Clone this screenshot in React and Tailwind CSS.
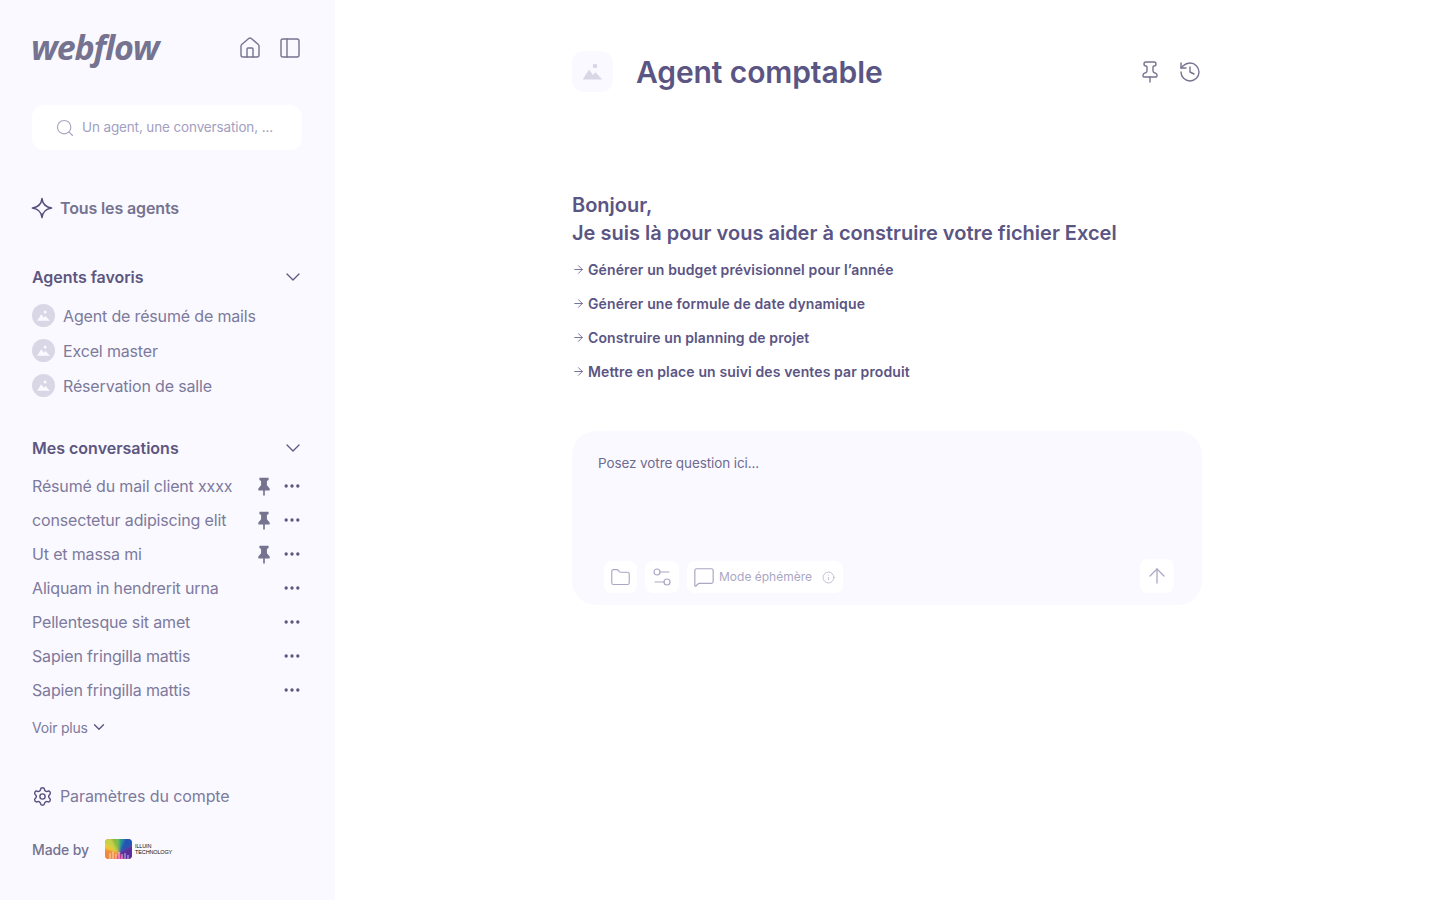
import React from 'react';
import {
  ArrowRight,
  ArrowUp,
  ChevronDown,
  Ellipsis,
  Folder,
  History,
  House,
  Info,
  MessageSquare,
  PanelLeft,
  Pin,
  Search,
  Settings,
  Settings2,
} from 'lucide-react';

const font = { fontFamily: '"Inter", "Liberation Sans", sans-serif' };

const favorites = ['Agent de résumé de mails', 'Excel master', 'Réservation de salle'];

const conversations = [
  { title: 'Résumé du mail client xxxx', pinned: true },
  { title: 'consectetur adipiscing elit', pinned: true },
  { title: 'Ut et massa mi', pinned: true },
  { title: 'Aliquam in hendrerit urna', pinned: false },
  { title: 'Pellentesque sit amet', pinned: false },
  { title: 'Sapien fringilla mattis', pinned: false },
  { title: 'Sapien fringilla mattis', pinned: false },
];

const suggestions = [
  'Générer un budget prévisionnel pour l’année',
  'Générer une formule de date dynamique',
  'Construire un planning de projet',
  'Mettre en place un suivi des ventes par produit',
];

const MountainIcon = ({ className }) => (
  <svg viewBox="0 0 20 20" className={className} fill="currentColor">
    <circle cx="12.2" cy="5.2" r="2" />
    <path d="M1.5 17 L7 8.2 L10.4 13 L12.6 10.6 L18.5 17 Z" />
  </svg>
);

const StarIcon = () => (
  <svg viewBox="0 0 24 24" className="w-[22px] h-[22px] text-[#57507f]" fill="none" stroke="currentColor" strokeWidth="1.6" strokeLinejoin="round">
    <path d="M12 1.5 C12.6 7.6 15.4 11 22.5 12 C15.4 13 12.6 16.4 12 22.5 C11.4 16.4 8.6 13 1.5 12 C8.6 11 11.4 7.6 12 1.5 Z" />
  </svg>
);

// filled pin of the conversation rows
const SolidPin = () => (
  <svg viewBox="0 0 24 24" className="w-[20px] h-[20px] text-[#75738f] mr-2" fill="currentColor">
    <path d="M6.5 2 H17.5 V4.8 L15.5 6 V11 L18.8 15 V17.5 H13 V23.5 H11 V17.5 H5.2 V15 L8.5 11 V6 L6.5 4.8 Z" />
  </svg>
);

const IlluinLogo = () => (
  <div className="flex items-center gap-[3px]">
    <svg viewBox="0 0 27 20" className="w-[27px] h-[20px]">
      <defs>
        <clipPath id="illuin-clip">
          <rect width="27" height="20" rx="4" />
        </clipPath>
        <filter id="illuin-soft">
          <feGaussianBlur stdDeviation="0.9" />
        </filter>
      </defs>
      <g clipPath="url(#illuin-clip)">
        <rect width="27" height="20" fill="#e3348f" />
        <g filter="url(#illuin-soft)">
          <polygon points="14,14 -2,14 -2,-2 6,-2" fill="#c5d24a" />
          <polygon points="14,14 6,-2 14,-2" fill="#7fbf3f" />
          <polygon points="14,14 14,-2 20,-2" fill="#1f9e8f" />
          <polygon points="14,14 20,-2 29,-2 29,6" fill="#2456b5" />
          <polygon points="14,14 29,6 29,22 20,22" fill="#5a2d9c" />
          <polygon points="14,14 -2,9 -2,22 10,22" fill="#f08a3c" />
          <polygon points="-2,9 -2,3 14,14" fill="#f2c832" />
        </g>
        <path d="M5 20V14M8 20V12.5M11 20V15M14 20V13M17 20V15M20 20V14M23 20V16" stroke="#ffffff" strokeWidth="1" opacity="0.7" />
      </g>
    </svg>
    <div className="text-[5.5px] leading-[6.5px] font-medium text-[#111111] tracking-[-0.15px]" style={{ fontFamily: '"Liberation Sans", sans-serif' }}>
      <div>ILLUIN</div>
      <div>TECHNOLOGY</div>
    </div>
  </div>
);

const Sidebar = () => (
  <aside className="w-[335px] h-[900px] shrink-0 bg-[#faf9ff] pl-8 pr-8 flex flex-col">
    <div className="h-[40px] mt-7 flex items-center justify-between">
      <span className="text-[34px] leading-none font-bold italic text-[#75738f] tracking-[-1.15px] -mt-[2px] -ml-px" style={{ fontFamily: '"Open Sans", sans-serif' }}>
        webflow
      </span>
      <div className="flex items-center gap-4 text-[#75738f] pr-px">
        <House className="w-6 h-6" strokeWidth={1.4} />
        <PanelLeft className="w-6 h-6" strokeWidth={1.4} />
      </div>
    </div>

    <div className="mt-[37px] h-[45px] w-[270px] bg-white rounded-xl flex items-center pl-[23px] gap-[7px]">
      <Search className="w-[20px] h-[20px] text-[#a8a5c3]" strokeWidth={1.4} />
      <span className="text-[13.5px] text-[#a3a0bf] tracking-[-0.13px]">Un agent, une conversation, ...</span>
    </div>

    <div className="mt-[47px] h-[22px] flex items-center gap-[7px] -ml-px">
      <StarIcon />
      <span className="text-[16px] font-semibold text-[#75738f] tracking-[-0.13px]">Tous les agents</span>
    </div>

    <div className="mt-[47px] h-[22px] flex items-center justify-between">
      <span className="text-[16px] font-semibold text-[#5c5680] tracking-[-0.05px]">Agents favoris</span>
      <ChevronDown className="w-6 h-6 text-[#5c5680] -mr-[2px]" strokeWidth={1.3} />
    </div>

    <ul className="mt-[16px] flex flex-col gap-[12px]">
      {favorites.map((name) => (
        <li key={name} className="h-[23px] flex items-center gap-2">
          <span className="w-[23px] h-[23px] rounded-full bg-[#d9d7e6] flex items-center justify-center">
            <MountainIcon className="w-[15px] h-[15px] text-[#faf9ff]" />
          </span>
          <span className="text-[16px] text-[#7d7a9c] tracking-[-0.16px]">{name}</span>
        </li>
      ))}
    </ul>

    <div className="mt-[40px] h-[22px] flex items-center justify-between">
      <span className="text-[16px] font-semibold text-[#5c5680]">Mes conversations</span>
      <ChevronDown className="w-6 h-6 text-[#5c5680] -mr-[2px]" strokeWidth={1.3} />
    </div>

    <ul className="mt-[10px] flex flex-col">
      {conversations.map((c, index) => (
        <li key={index} className="h-[34px] flex items-center pr-px">
          <span className="flex-1 text-[16px] text-[#7d7a9c] tracking-[-0.16px] whitespace-nowrap">{c.title}</span>
          {c.pinned && <SolidPin />}
          <Ellipsis className="w-[20px] h-[20px] text-[#5c5680]" strokeWidth={2} />
        </li>
      ))}
    </ul>

    <div className="mt-[10px] h-[20px] flex items-center gap-[2px]">
      <span className="text-[14px] text-[#7d7a9c] tracking-[-0.2px]">Voir plus</span>
      <ChevronDown className="w-[18px] h-[18px] text-[#5c5680]" strokeWidth={1.8} />
    </div>

    <div className="mt-[48px] h-[22px] flex items-center gap-[7px]">
      <Settings className="w-[21px] h-[21px] text-[#57507f]" strokeWidth={1.6} />
      <span className="text-[16px] text-[#7d7a9c] tracking-[-0.1px]">Paramètres du compte</span>
    </div>

    <div className="mt-[31px] h-[22px] flex items-center gap-[16px]">
      <span className="text-[14px] font-medium text-[#75738f] tracking-[-0.1px]">Made by</span>
      <IlluinLogo />
    </div>
  </aside>
);

const Composer = () => (
  <div className="mt-[43px] h-[174px] bg-[#faf9ff] rounded-3xl pl-[26px] pr-[26px] pt-[24px] flex flex-col">
    <p className="text-[13.5px] leading-[16px] text-[#6f6b8f] tracking-[-0.1px]">Posez votre question ici...</p>
    <div className="mt-auto mb-[12px] ml-[6px] mr-[2px] flex items-end justify-between">
      <div className="flex gap-2">
        <button className="w-[33px] h-[32px] bg-white rounded-lg flex items-center justify-center text-[#aaa7c4]">
          <Folder className="w-[21px] h-[21px]" strokeWidth={1.3} />
        </button>
        <button className="w-[34px] h-[32px] bg-white rounded-lg flex items-center justify-center text-[#aaa7c4]">
          <Settings2 className="w-6 h-6" strokeWidth={1.2} />
        </button>
        <div className="h-[32px] bg-white rounded-lg flex items-center pl-[6px] pr-2 text-[#aaa7c4]">
          <MessageSquare className="w-[22px] h-[22px] mr-[4px]" strokeWidth={1.3} />
          <span className="text-[12px] mr-[10px]">Mode éphémère</span>
          <Info className="w-[13px] h-[13px]" strokeWidth={1.3} />
        </div>
      </div>
      <button className="w-[34px] h-[34px] bg-white rounded-lg flex items-center justify-center text-[#aaa7c4]">
        <ArrowUp className="w-6 h-6" strokeWidth={1.3} />
      </button>
    </div>
  </div>
);

const App = () => (
  <div className="w-full h-[900px] flex bg-white overflow-hidden" style={font}>
    <Sidebar />
    <main className="flex-1 flex justify-center pr-px">
      <div className="w-[630px]">
        <header className="mt-[51px] h-[41px] flex items-center">
          <span className="w-[41px] h-[41px] rounded-xl bg-[#faf9ff] flex items-center justify-center">
            <MountainIcon className="w-[23px] h-[23px] text-[#d9d7e6]" />
          </span>
          <h1 className="ml-[23px] mt-[2px] flex-1 text-[30px] font-semibold text-[#5b5584] tracking-[-0.1px]">Agent comptable</h1>
          <div className="flex items-center gap-4 text-[#75738f]">
            <Pin className="w-6 h-6" strokeWidth={1.4} />
            <History className="w-6 h-6" strokeWidth={1.4} />
          </div>
        </header>

        <div className="mt-[99px] text-[20px] leading-[28px] font-semibold text-[#5b5584]">
          <p>Bonjour,</p>
          <p>Je suis là pour vous aider à construire votre fichier Excel</p>
        </div>

        <ul className="mt-[5px] flex flex-col">
          {suggestions.map((text) => (
            <li key={text} className="h-[34px] flex items-center gap-[3px]">
              <ArrowRight className="w-[13px] h-[13px] text-[#5b5584]" strokeWidth={1.5} />
              <span className="text-[14px] font-semibold text-[#5b5584] tracking-[0.12px]">{text}</span>
            </li>
          ))}
        </ul>

        <Composer />
      </div>
    </main>
  </div>
);

export default App;
